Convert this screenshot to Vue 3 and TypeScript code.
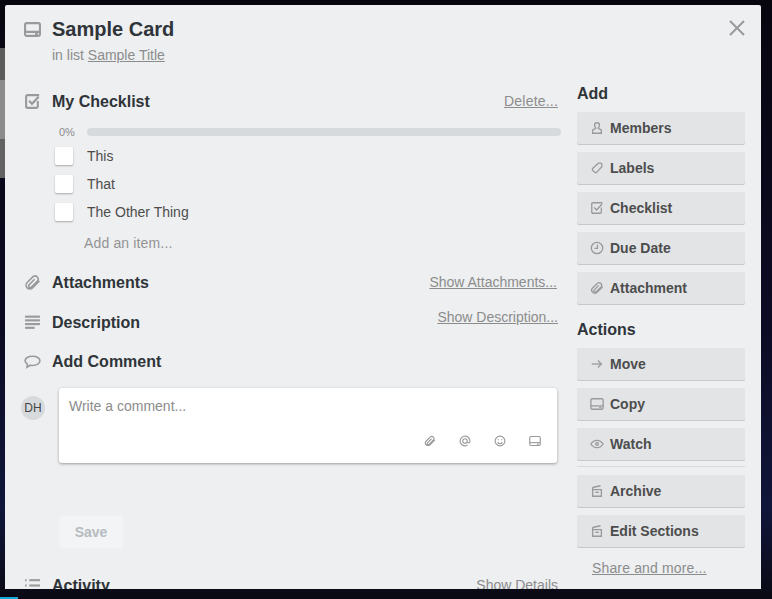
<script setup lang="ts">
const icons: Record<string, string[]> = {
  card: ['M2.5 2h11A1.500 1.500 0 0 1 15 3.500v9a1.500 1.500 0 0 1-1.500 1.500h-11A1.500 1.500 0 0 1 1 12.500v-9A1.500 1.500 0 0 1 2.500 2z', 'M1 10.200h14', 'M10.500 12.200h2.500'],
  check: ['M13 7.500v5.200a1.300 1.300 0 0 1-1.300 1.300H3.300A1.300 1.300 0 0 1 2 12.700V3.300A1.300 1.300 0 0 1 3.300 2h11', 'M4.800 7.400l2.700 2.800 6.300-6.700'],
  clip: ['M14.500 6.500L8 13a3.500 3.500 0 0 1-5-5l5.500-5.500a3 3 0 0 1 4.200 4.200L6.800 12.500a1.500 1.500 0 0 1-2.100-2.100L10 5'],
  lines: ['M1 2.500h14', 'M1 6h14', 'M1 9.500h14', 'M1 13h9'],
  comment: ['M8 3c3.900 0 7 1.900 7 4.400s-3.100 4.300-7 4.300c-.7 0-1.400 0-2-.2L2.800 13.300l.5-2.800C1.900 9.700 1 8.600 1 7.400 1 4.900 4.100 3 8 3z'],
  at: ['M11 8a3 3 0 1 1-6 0 3 3 0 0 1 6 0v1.200a1.800 1.800 0 0 0 3.500 0V8A6.500 6.500 0 1 0 11.500 13.500'],
  smile: ['M8 1.500a6.500 6.500 0 1 1 0 13 6.500 6.500 0 0 1 0-13z', 'M5.600 5.500v1.500', 'M10.400 5.500v1.500', 'M4.800 9.500c.8 1.500 1.900 2.200 3.200 2.200s2.400-.7 3.200-2.200'],
  person: ['M8 2a2.800 2.800 0 0 1 2.800 2.800c0 1.200-.5 2.200-1.300 2.800v1c1.800.4 3.500 1.300 3.500 2.400V14H3v-3c0-1.100 1.700-2 3.500-2.400v-1C5.700 7 5.200 6 5.200 4.800A2.800 2.800 0 0 1 8 2z'],
  label: ['M9.500 2.500h3a1 1 0 0 1 1 1v3L7.500 13a1.500 1.500 0 0 1-2 0L3 10.500a1.500 1.500 0 0 1 0-2z'],
  clock: ['M8 1.500a6.500 6.500 0 1 1 0 13 6.500 6.500 0 0 1 0-13z', 'M8.500 4v4.500H5'],
  arrow: ['M2 8h11', 'M9 4l4 4-4 4'],
  eye: ['M1 8c1.800-2.800 4.200-4.200 7-4.200s5.200 1.400 7 4.200c-1.800 2.800-4.200 4.200-7 4.200S2.800 10.800 1 8z', 'M8 6.500a1.500 1.500 0 1 1 0 3 1.500 1.500 0 0 1 0-3z'],
  archive: ['M3 6.500h10V14H3z', 'M3 4l9-2', 'M3 4v2.500', 'M6 9.500h4'],
  activity: ['M1 3h1.500', 'M5 3h10', 'M1 8h1.500', 'M5 8h10', 'M1 13h1.500', 'M5 13h10'],
}

const addActions = [
  { label: 'Members', icon: 'person' },
  { label: 'Labels', icon: 'label' },
  { label: 'Checklist', icon: 'check' },
  { label: 'Due Date', icon: 'clock' },
  { label: 'Attachment', icon: 'clip' },
]
const mainActions = [
  { label: 'Move', icon: 'arrow' },
  { label: 'Copy', icon: 'card' },
  { label: 'Watch', icon: 'eye' },
]
const moreActions = [
  { label: 'Archive', icon: 'archive' },
  { label: 'Edit Sections', icon: 'archive' },
]
const items = ['This', 'That', 'The Other Thing']
const tools = ['clip', 'at', 'smile', 'card']
</script>

<template>
  <div class="page">
    <div class="backdrop-strip"></div>
    <div class="backdrop-tab"></div>
    <div class="modal">
      <button class="close" aria-label="Close">
        <svg viewBox="0 0 16 16" width="16" height="16"><path d="M1 1l14 14M15 1L1 15" /></svg>
      </button>

      <header class="header">
        <svg class="sec-icon head-icon" viewBox="0 0 16 16"><path v-for="d in icons.card" :key="d" :d="d" /></svg>
        <div>
          <h1 class="title">Sample Card</h1>
          <p class="sub">in list <a class="link">Sample Title</a></p>
        </div>
      </header>

      <div class="columns">
        <main class="main">
          <section class="sec-head first">
            <svg class="sec-icon" viewBox="0 0 16 16"><path v-for="d in icons.check" :key="d" :d="d" /></svg>
            <h2>My Checklist</h2>
            <a class="link side-link delete">Delete...</a>
          </section>
          <div class="progress">
            <span class="pct">0%</span>
            <div class="track"></div>
          </div>
          <div v-for="item in items" :key="item" class="item">
            <span class="box"></span>
            <span>{{ item }}</span>
          </div>
          <div class="add-item">Add an item...</div>

          <section class="sec-head attach">
            <svg class="sec-icon thin" viewBox="0 0 16 16"><path v-for="d in icons.clip" :key="d" :d="d" /></svg>
            <h2>Attachments</h2>
            <a class="link side-link attach-link">Show Attachments...</a>
          </section>
          <section class="sec-head descr">
            <svg class="sec-icon" viewBox="0 0 16 16"><path v-for="d in icons.lines" :key="d" :d="d" /></svg>
            <h2>Description</h2>
            <a class="link side-link raised">Show Description...</a>
          </section>
          <section class="sec-head comment-head">
            <svg class="sec-icon thin" viewBox="0 0 16 16"><path v-for="d in icons.comment" :key="d" :d="d" /></svg>
            <h2>Add Comment</h2>
          </section>

          <div class="comment-row">
            <div class="avatar">DH</div>
            <div class="comment-box">
              <div class="placeholder">Write a comment...</div>
              <div class="tools">
                <svg v-for="t in tools" :key="t" class="tool" viewBox="0 0 16 16"><path v-for="d in icons[t]" :key="d" :d="d" /></svg>
              </div>
            </div>
          </div>
          <button class="save">Save</button>

          <section class="sec-head activity">
            <svg class="sec-icon" viewBox="0 0 16 16"><path v-for="d in icons.activity" :key="d" :d="d" /></svg>
            <h2>Activity</h2>
            <a class="plain-link side-link">Show Details</a>
          </section>
        </main>

        <aside class="side">
          <h3 class="add-title">Add</h3>
          <button v-for="a in addActions" :key="a.label" class="action">
            <svg class="a-icon" viewBox="0 0 16 16"><path v-for="d in icons[a.icon]" :key="d" :d="d" /></svg>
            {{ a.label }}
          </button>
          <h3 class="actions-title">Actions</h3>
          <button v-for="a in mainActions" :key="a.label" class="action">
            <svg class="a-icon" viewBox="0 0 16 16"><path v-for="d in icons[a.icon]" :key="d" :d="d" /></svg>
            {{ a.label }}
          </button>
          <hr class="divider" />
          <button v-for="a in moreActions" :key="a.label" class="action">
            <svg class="a-icon" viewBox="0 0 16 16"><path v-for="d in icons[a.icon]" :key="d" :d="d" /></svg>
            {{ a.label }}
          </button>
          <a class="link share">Share and more...</a>
        </aside>
      </div>
    </div>
  </div>
</template>

<style>
html,
body {
  margin: 0;
  background: #0b0a1c;
}
</style>

<style scoped>
.page {
  position: relative;
  width: 772px;
  height: 599px;
  padding: 5px 0 0 5px;
  box-sizing: border-box;
  overflow: hidden;
  background: linear-gradient(180deg, #07060f 0%, #0c0b24 55%, #10163a 85%, #0a0a14 100%);
  font-family: "Liberation Sans", Arial, sans-serif;
}
.backdrop-strip {
  position: absolute;
  left: 0;
  top: 48px;
  width: 5px;
  height: 130px;
  background: linear-gradient(180deg, #5c5c5c 0 25%, #8b8b8b 25% 70%, #626262 70% 100%);
}
.backdrop-tab {
  position: absolute;
  left: 0;
  bottom: 0;
  width: 18px;
  height: 2px;
  background: #17a9dc;
}
.modal {
  position: relative;
  box-sizing: border-box;
  width: 756px;
  height: 584px;
  padding: 12px 16px 0 19px;
  overflow: hidden;
  background: #edeff1;
  border-radius: 2px 2px 0 0;
}
.close {
  position: absolute;
  top: 15px;
  right: 16px;
  padding: 0;
  border: 0;
  background: none;
  line-height: 0;
}
.header {
  display: flex;
  align-items: flex-start;
}
.title {
  margin: 0;
  font-size: 20px;
  line-height: 24px;
  font-weight: 700;
  color: #2f3439;
}
.sub {
  margin: 4px 0 0;
  font-size: 14px;
  line-height: 20px;
  color: #8c8c8c;
}
.link {
  color: #8c8c8c;
  text-decoration: underline;
}
.plain-link {
  color: #8c8c8c;
  font-size: 14px;
}
.sec-icon {
  flex: none;
  width: 17px;
  height: 17px;
  margin-right: 11px;
}
.head-icon {
  margin-top: 4px;
}
svg path {
  fill: none;
  stroke: #9a9a9a;
  stroke-width: 2;
}
.sec-icon.thin path {
  stroke-width: 1.500;
}
.columns {
  display: flex;
  gap: 16px;
  margin-top: 18px;
}
.main {
  flex: none;
  width: 537px;
}
.sec-head {
  display: flex;
  align-items: center;
  height: 24px;
}
.sec-head h2 {
  margin: 2px 0 0;
  flex: 1;
  font-size: 16px;
  line-height: 24px;
  font-weight: 700;
  color: #2f3439;
}
.first {
  margin-top: 6px;
}
.side-link {
  margin-right: 3px;
  font-size: 14px;
}
.delete {
  letter-spacing: 0.2px;
}
.attach-link {
  margin-right: 4px;
}
.raised {
  margin-top: -10px;
}
.progress {
  display: flex;
  align-items: center;
  height: 16px;
  margin-top: 11px;
  padding-left: 35px;
}
.pct {
  width: 28px;
  font-size: 11px;
  color: #8c8c8c;
}
.track {
  flex: 1;
  height: 8px;
  border-radius: 4px;
  background: #d6dadc;
}
.item {
  display: flex;
  align-items: center;
  height: 28px;
  margin-left: 31px;
  font-size: 14px;
  color: #4d4d4d;
}
.progress + .item {
  margin-top: 2px;
}
.box {
  flex: none;
  width: 18px;
  height: 18px;
  margin-right: 14px;
  border-radius: 2px;
  background: #fff;
  box-shadow: 0 1px 2px rgba(0, 0, 0, 0.3);
}
.add-item {
  margin: 7px 0 0 60px;
  font-size: 14px;
  line-height: 20px;
  letter-spacing: 0.15px;
  color: #939393;
}
.attach {
  margin-top: 17px;
}
.descr {
  margin-top: 16px;
}
.comment-head {
  margin-top: 15px;
}
.comment-row {
  display: flex;
  align-items: flex-start;
  margin-top: 15px;
}
.avatar {
  flex: none;
  width: 24px;
  height: 24px;
  margin: 8px 14px 0 -3px;
  border-radius: 50%;
  background: #d6dadc;
  color: #444;
  font-size: 12px;
  line-height: 24px;
  text-align: center;
}
.comment-box {
  position: relative;
  box-sizing: border-box;
  width: 498px;
  height: 75px;
  padding: 9px 10px;
  border-radius: 3px;
  background: #fff;
  box-shadow: 0 1px 3px rgba(0, 0, 0, 0.35);
}
.placeholder {
  font-size: 14px;
  line-height: 18px;
  color: #8c8c8c;
}
.tools {
  position: absolute;
  right: 16px;
  bottom: 16px;
  display: flex;
  gap: 23px;
}
.tool {
  width: 12px;
  height: 12px;
}
.tool path {
  stroke-width: 1.500;
}
.save {
  display: block;
  width: 64px;
  height: 32px;
  margin: 53px 0 0 35px;
  padding: 0;
  border: 0;
  border-radius: 2px;
  background: #f3f4f5;
  color: #b6bbbf;
  font: 700 14px "Liberation Sans", Arial, sans-serif;
}
.activity {
  margin-top: 25px;
}
.side {
  flex: none;
  width: 168px;
  display: flex;
  flex-direction: column;
}
.side h3 {
  margin: 0;
  font-size: 16px;
  line-height: 20px;
  font-weight: 700;
  color: #2f3439;
}
.side .add-title {
  margin: 1px 0 8px;
}
.side .actions-title {
  margin: 8px 0 8px;
}
.action {
  display: flex;
  align-items: center;
  gap: 6px;
  box-sizing: border-box;
  height: 32px;
  margin-bottom: 8px;
  padding: 0 0 0 13px;
  border: 0;
  border-radius: 2px;
  background: #e2e4e6;
  box-shadow: 0 1px 0 #c4c9cc;
  color: #4d4d4d;
  font: 700 14px "Liberation Sans", Arial, sans-serif;
  text-align: left;
}
.a-icon {
  flex: none;
  width: 14px;
  height: 14px;
}
.a-icon path {
  stroke-width: 1.500;
}
.divider {
  width: 100%;
  height: 1px;
  margin: -2px 0 8px;
  border: 0;
  background: #d6dadc;
}
.share {
  margin: 3px 0 0 15px;
  font-size: 14px;
  line-height: 20px;
  letter-spacing: 0.15px;
}
</style>
